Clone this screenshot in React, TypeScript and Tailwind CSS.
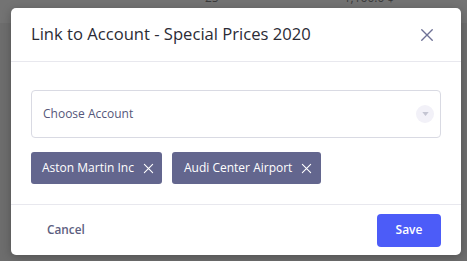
import React from "react";

const XIcon = ({ className }: { className?: string }) => (
  <svg viewBox="0 0 16 16" className={className} fill="none" stroke="currentColor" strokeWidth={1.6} strokeLinecap="round">
    <path d="M2 2L14 14M14 2L2 14" />
  </svg>
);

export default function App() {
  return (
    <div
      className="relative w-[467px] h-[261px] overflow-hidden bg-[#6d6d6d]"
      style={{ fontFamily: '"Open Sans", "Noto Sans", sans-serif' }}
    >
      {/* background page */}
      <div className="h-[33px] bg-[#737373] relative">
        <div className="flex text-[12px] text-[#3a3a3a] -mt-[10px] leading-[16px] whitespace-nowrap">
          <span className="ml-[205px]">25</span>
          <span className="ml-[125px]">1,160.0 $</span>
        </div>
      </div>

      {/* modal */}
      <div className="absolute left-[11px] top-[8px] w-[450px] h-[247px] bg-white rounded-[5px] shadow-[0_2px_10px_rgba(0,0,0,0.25)] flex flex-col">
        <div className="h-[54px] flex items-center justify-between pl-[20px] pr-[27px] border-b border-[#e8e8ee]">
          <div className="text-[16.6px] text-[#2b2b35] whitespace-nowrap">Link to Account - Special Prices 2020</div>
          <XIcon className="w-[14px] h-[14px] text-[#6e7196]" />
        </div>
        <div className="h-[143px] px-[20px] pt-[28px] border-b border-[#e8e8ee]">
          <div className="h-[48px] border border-[#d9dae3] rounded-[4px] flex items-center justify-between pl-[11px] pr-[6px]">
            <span className="text-[12px] text-[#55577a] whitespace-nowrap">Choose Account</span>
            <div className="w-[18px] h-[18px] rounded-full bg-[#f2f1f8] flex items-center justify-center">
              <svg viewBox="0 0 8 5" className="w-[7px] h-[4px]"><path d="M0 0H8L4 5Z" fill="#c4c5d2" /></svg>
            </div>
          </div>
          <div className="flex gap-[10px] mt-[14px]">
            <div className="h-[32px] w-[131px] rounded-[3px] bg-[#63668e] flex items-center pl-[11px] gap-[9px] text-white whitespace-nowrap">
              <span className="text-[12px]">Aston Martin Inc</span>
              <XIcon className="w-[11px] h-[11px]" />
            </div>
            <div className="h-[32px] w-[149px] rounded-[3px] bg-[#63668e] flex items-center pl-[12px] gap-[9px] text-white whitespace-nowrap">
              <span className="text-[12px]">Audi Center Airport</span>
              <XIcon className="w-[11px] h-[11px]" />
            </div>
          </div>
        </div>
        <div className="flex-1 flex items-center justify-between pl-[36px] pr-[20px]">
          <span className="text-[11.8px] font-semibold text-[#5d6080]">Cancel</span>
          <div className="w-[64px] h-[33px] rounded-[4px] bg-[#4c5cf8] flex items-center justify-center text-white text-[12px] font-semibold">
            Save
          </div>
        </div>
      </div>
    </div>
  );
}
